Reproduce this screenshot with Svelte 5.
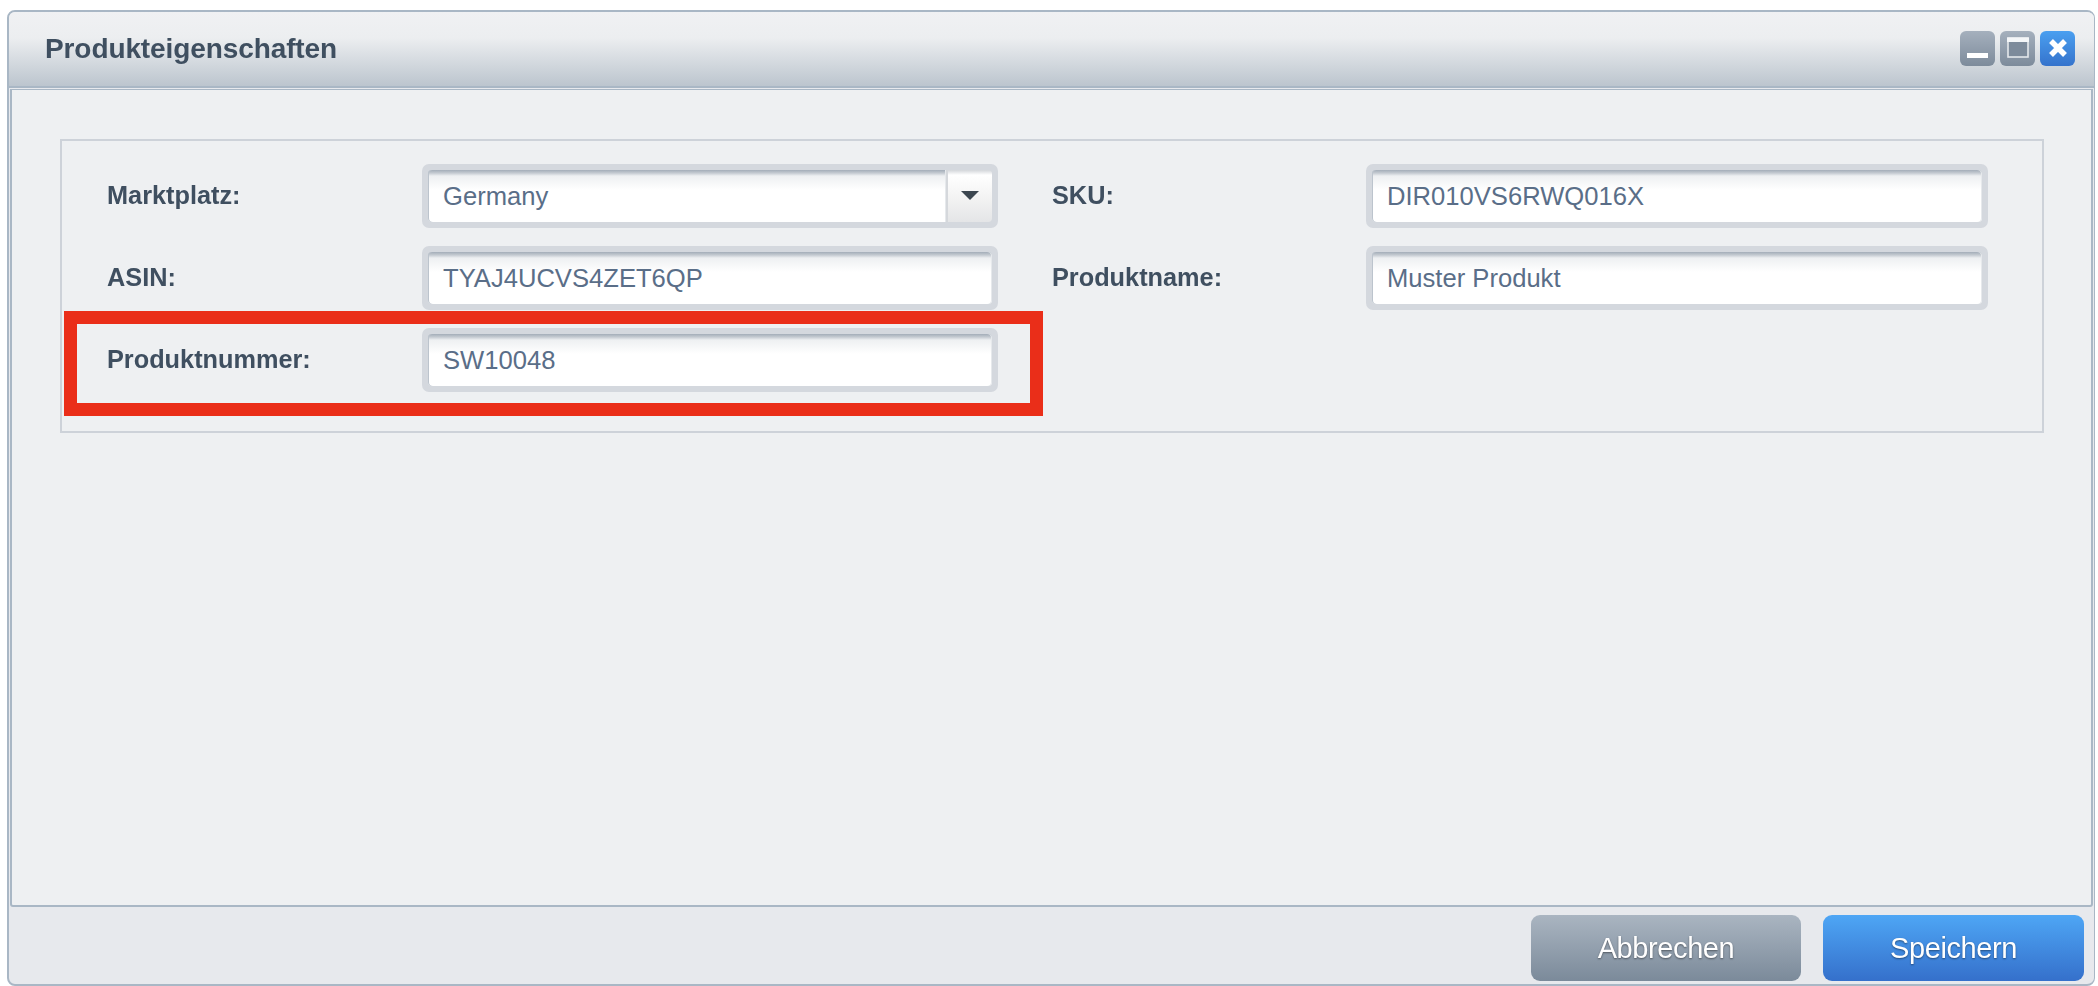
<script>
  const rows = [
    [{ label: 'Marktplatz:', value: 'Germany', select: true }, { label: 'SKU:', value: 'DIR010VS6RWQ016X' }],
    [{ label: 'ASIN:', value: 'TYAJ4UCVS4ZET6QP' }, { label: 'Produktname:', value: 'Muster Produkt' }],
    [{ label: 'Produktnummer:', value: 'SW10048' }]
  ];
</script>

<div class="page">
  <div class="window">
    <header class="titlebar">
      <h1>Produkteigenschaften</h1>
      <div class="controls">
        <button class="ctl" aria-label="Minimieren">
          <svg viewBox="0 0 35 35" width="35" height="35"><rect x="7" y="22" width="21" height="5" fill="#fff"/></svg>
        </button>
        <button class="ctl" aria-label="Maximieren">
          <svg viewBox="0 0 35 35" width="35" height="35"><rect x="8" y="7" width="20" height="19" fill="#7d8b9b" stroke="#e4e8ec" stroke-width="1.6"/><rect x="7" y="6.5" width="22" height="4.5" fill="#f4f6f8"/></svg>
        </button>
        <button class="ctl close" aria-label="Schließen">
          <svg viewBox="0 0 35 35" width="35" height="35"><path d="M11 10 L25 24 M25 10 L11 24" stroke="#fff" stroke-width="5.5" fill="none"/></svg>
        </button>
      </div>
    </header>

    <main class="content">
      <section class="fields">
        <div class="grid">
          {#each rows as row}
            {#each row as f, i}
              <span class="label" class:second={i === 1}>{f.label}</span>
              <div class="field">
                <input readonly value={f.value} aria-label={f.label} />
                {#if f.select}
                  <span class="trigger"><i></i></span>
                {/if}
              </div>
            {/each}
          {/each}
        </div>
      </section>
      <div class="highlight"></div>
    </main>

    <footer class="footer">
      <button class="btn grey">Abbrechen</button>
      <button class="btn blue">Speichern</button>
    </footer>
  </div>
</div>

<style>
  :global(body) { margin: 0; background: #fff; }
  .page {
    width: 2098px; height: 986px; box-sizing: border-box;
    padding: 10px 3px 0 7px;
    font-family: "Liberation Sans", Arial, sans-serif;
  }
  .window {
    height: 100%; box-sizing: border-box; display: flex; flex-direction: column;
    border: 2px solid #a9b7c5; border-radius: 8px; background: #e7e9ed; overflow: hidden;
    border-right-width: 1px;
  }
  .titlebar {
    height: 74px; flex: none; display: flex; align-items: center; justify-content: space-between;
    background: linear-gradient(#f0f1f3, #eceef0 35%, #bcc5ce);
    border-bottom: 2px solid #a9b7c5; box-sizing: content-box;
    padding: 0 19px 0 36px;
  }
  h1 {
    margin: 0; font-size: 28px; line-height: 30px; font-weight: 700; color: #3f4f60;
    letter-spacing: -0.1px; filter: blur(0.6px);
  }
  .controls { display: flex; gap: 5px; margin-top: -1px; }
  .ctl {
    width: 35px; height: 35px; padding: 0; border: 0; border-radius: 6px; display: block;
    background: linear-gradient(#a5b0bd, #7d8b9b);
  }
  .ctl svg { display: block; }
  .ctl.close { background: linear-gradient(#4a9ff0, #3573cc); }
  .content {
    position: relative; flex: none; height: 818px; box-sizing: border-box;
    background: #eef0f2; border: 2px solid #a9b7c5; border-top-width: 1px; border-radius: 0 0 3px 3px;
    margin: 1px 1px 0 1px;
    padding: 49px 47px 0 48px;
  }
  .fields {
    height: 294px; box-sizing: border-box; border: 2px solid #cdd2d9;
    padding: 23px 0 0 45px;
  }
  .grid {
    display: grid; grid-template-columns: 315px 576px 368px 622px;
    grid-auto-rows: 64px; row-gap: 18px; align-items: center;
  }
  .label { font-size: 25.3px; font-weight: 700; color: #3f4f60; filter: blur(0.6px); margin-top: -1px; }
  .label.second { padding-left: 54px; }
  .field {
    position: relative; height: 64px; box-sizing: border-box; display: flex;
    border: 6px solid #d4d8de; border-radius: 7px; overflow: hidden; background: #d4d8de;
  }
  .field input {
    flex: 1; min-width: 0; border: 0; outline: 0; margin: 0; padding: 0 0 0 15px;
    border-radius: 4px; box-shadow: inset 1px 0 0 #bcc4cd, inset -1px 0 0 #e6e9ec;
    font: 400 25.6px "Liberation Sans", Arial, sans-serif; color: #5a6e88;
    background: linear-gradient(#a3adb8 0, #c4cad1 3px, #eef0f2 6px, #fff 20px);
  }
  .trigger + .trigger { display: none; }
  .field input:not(:last-child) { border-radius: 4px 0 0 4px; }
  .trigger {
    flex: none; width: 46px; position: relative; border-left: 2px solid #d5d8dc; box-sizing: border-box;
    border-radius: 0 4px 4px 0;
    background: linear-gradient(#d3d6da, #fff 5px, #f4f4f4 50%, #e4e5e7);
  }
  .trigger i {
    position: absolute; left: 13px; top: 21px; width: 0; height: 0;
    border-left: 9px solid transparent; border-right: 9px solid transparent; border-top: 9px solid #3c4650;
  }
  .highlight {
    position: absolute; left: 52px; top: 221px; width: 979px; height: 105px; box-sizing: border-box;
    border: 13px solid #ea2e19; pointer-events: none;
  }
  .footer {
    flex: 1; min-height: 0; display: flex; justify-content: flex-end; gap: 22px;
    padding: 8px 10px 0 0; box-sizing: border-box;
  }
  .btn {
    width: 270px; height: 66px; border: 0; border-radius: 9px; padding: 0;
    font: 400 29px "Liberation Sans", Arial, sans-serif; color: #fff;
    text-shadow: 0 1px 2px rgba(0,0,0,.45); filter: blur(0.4px); letter-spacing: -0.4px;
  }
  .grey { background: linear-gradient(#aab5c1, #7b8a9a); }
  .blue { width: 261px; background: linear-gradient(#4ea6f5, #3570cb); }
</style>
